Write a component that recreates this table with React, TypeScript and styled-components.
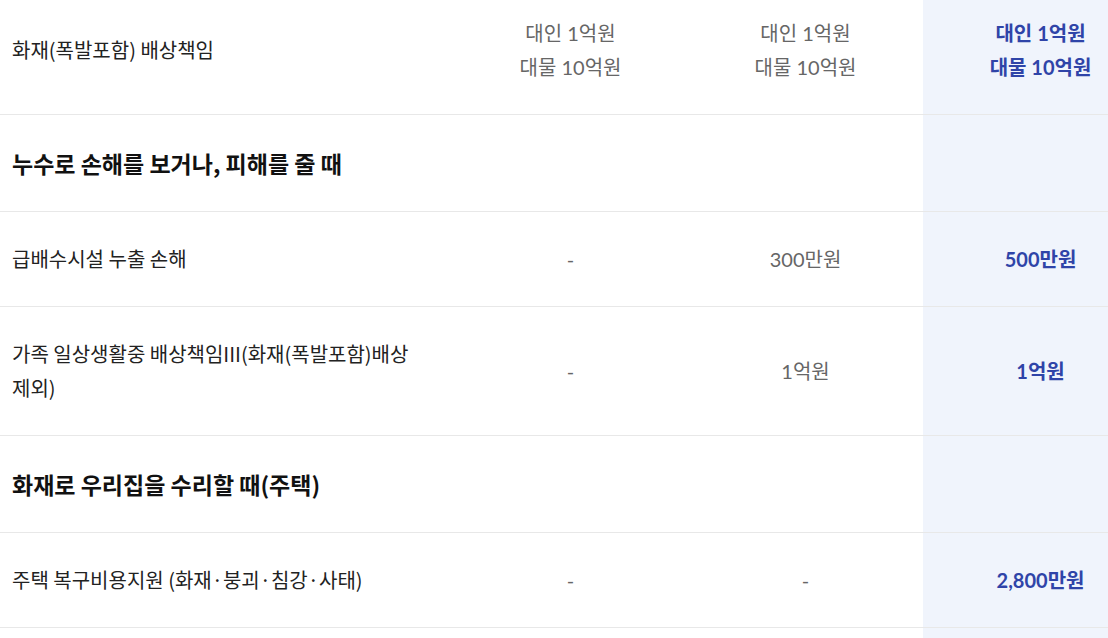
import styled, { createGlobalStyle } from "styled-components";

const GlobalStyle = createGlobalStyle`
  html, body {
    margin: 0;
    padding: 0;
    background: #ffffff;
    overflow: hidden;
  }
  body {
    font-family: "Noto Sans CJK KR", "Noto Sans", sans-serif;
  }
`;

const Table = styled.table`
  width: 1158px;
  margin-top: -14px;
  border-collapse: collapse;
  table-layout: fixed;
`;

const Row = styled.tr`
  border-bottom: 1px solid #e8e8e8;
`;

const Label = styled.th`
  padding: 30px 28px 30px 12px;
  text-align: left;
  vertical-align: middle;
  font-family: "Noto Sans CJK KR", sans-serif;
  font-size: 20px;
  font-weight: 400;
  line-height: 34px;
  color: #222222;
`;

const SectionTitle = styled.th`
  padding: 30px 12px;
  text-align: left;
  vertical-align: middle;
  font-family: "Noto Sans CJK KR", sans-serif;
  font-size: 23px;
  font-weight: 700;
  line-height: 36px;
  color: #111111;
`;

const Value = styled.td<{ $highlight?: boolean }>`
  padding: 30px 0;
  text-align: center;
  vertical-align: middle;
  font-family: Lato, "Noto Sans CJK KR", sans-serif;
  font-size: 20px;
  line-height: 34px;
  font-weight: ${(p) => (p.$highlight ? 700 : 400)};
  color: ${(p) => (p.$highlight ? "#2f44a8" : "#666666")};
  background: ${(p) => (p.$highlight ? "#f0f4fc" : "transparent")};
`;

type Item = {
  kind: "item";
  label: string;
  values: [string, string, string];
};

type Section = { kind: "section"; title: string };

const rows: (Item | Section)[] = [
  {
    kind: "item",
    label: "화재(폭발포함) 배상책임",
    values: ["대인 1억원\n대물 10억원", "대인 1억원\n대물 10억원", "대인 1억원\n대물 10억원"],
  },
  { kind: "section", title: "누수로 손해를 보거나, 피해를 줄 때" },
  { kind: "item", label: "급배수시설 누출 손해", values: ["-", "300만원", "500만원"] },
  {
    kind: "item",
    label: "가족 일상생활중 배상책임III(화재(폭발포함)배상제외)",
    values: ["-", "1억원", "1억원"],
  },
  { kind: "section", title: "화재로 우리집을 수리할 때(주택)" },
  {
    kind: "item",
    label: "주택 복구비용지원 (화재·붕괴·침강·사태)",
    values: ["-", "-", "2,800만원"],
  },
  { kind: "item", label: "", values: ["", "", ""] },
];

const Lines = ({ text }: { text: string }) => (
  <>
    {text.split("\n").map((line, i) => (
      <div key={i}>{line}</div>
    ))}
  </>
);

const App = () => {
  return (
    <>
      <GlobalStyle />
      <Table>
        <colgroup>
          <col style={{ width: 453 }} />
          <col style={{ width: 235 }} />
          <col style={{ width: 235 }} />
          <col style={{ width: 235 }} />
        </colgroup>
        <tbody>
          {rows.map((row, i) =>
            row.kind === "section" ? (
              <Row key={i}>
                <SectionTitle colSpan={3}>{row.title}</SectionTitle>
                <Value $highlight />
              </Row>
            ) : (
              <Row key={i}>
                <Label>{row.label}</Label>
                <Value>
                  <Lines text={row.values[0]} />
                </Value>
                <Value>
                  <Lines text={row.values[1]} />
                </Value>
                <Value $highlight>
                  <Lines text={row.values[2]} />
                </Value>
              </Row>
            )
          )}
        </tbody>
      </Table>
    </>
  );
};

export default App;
